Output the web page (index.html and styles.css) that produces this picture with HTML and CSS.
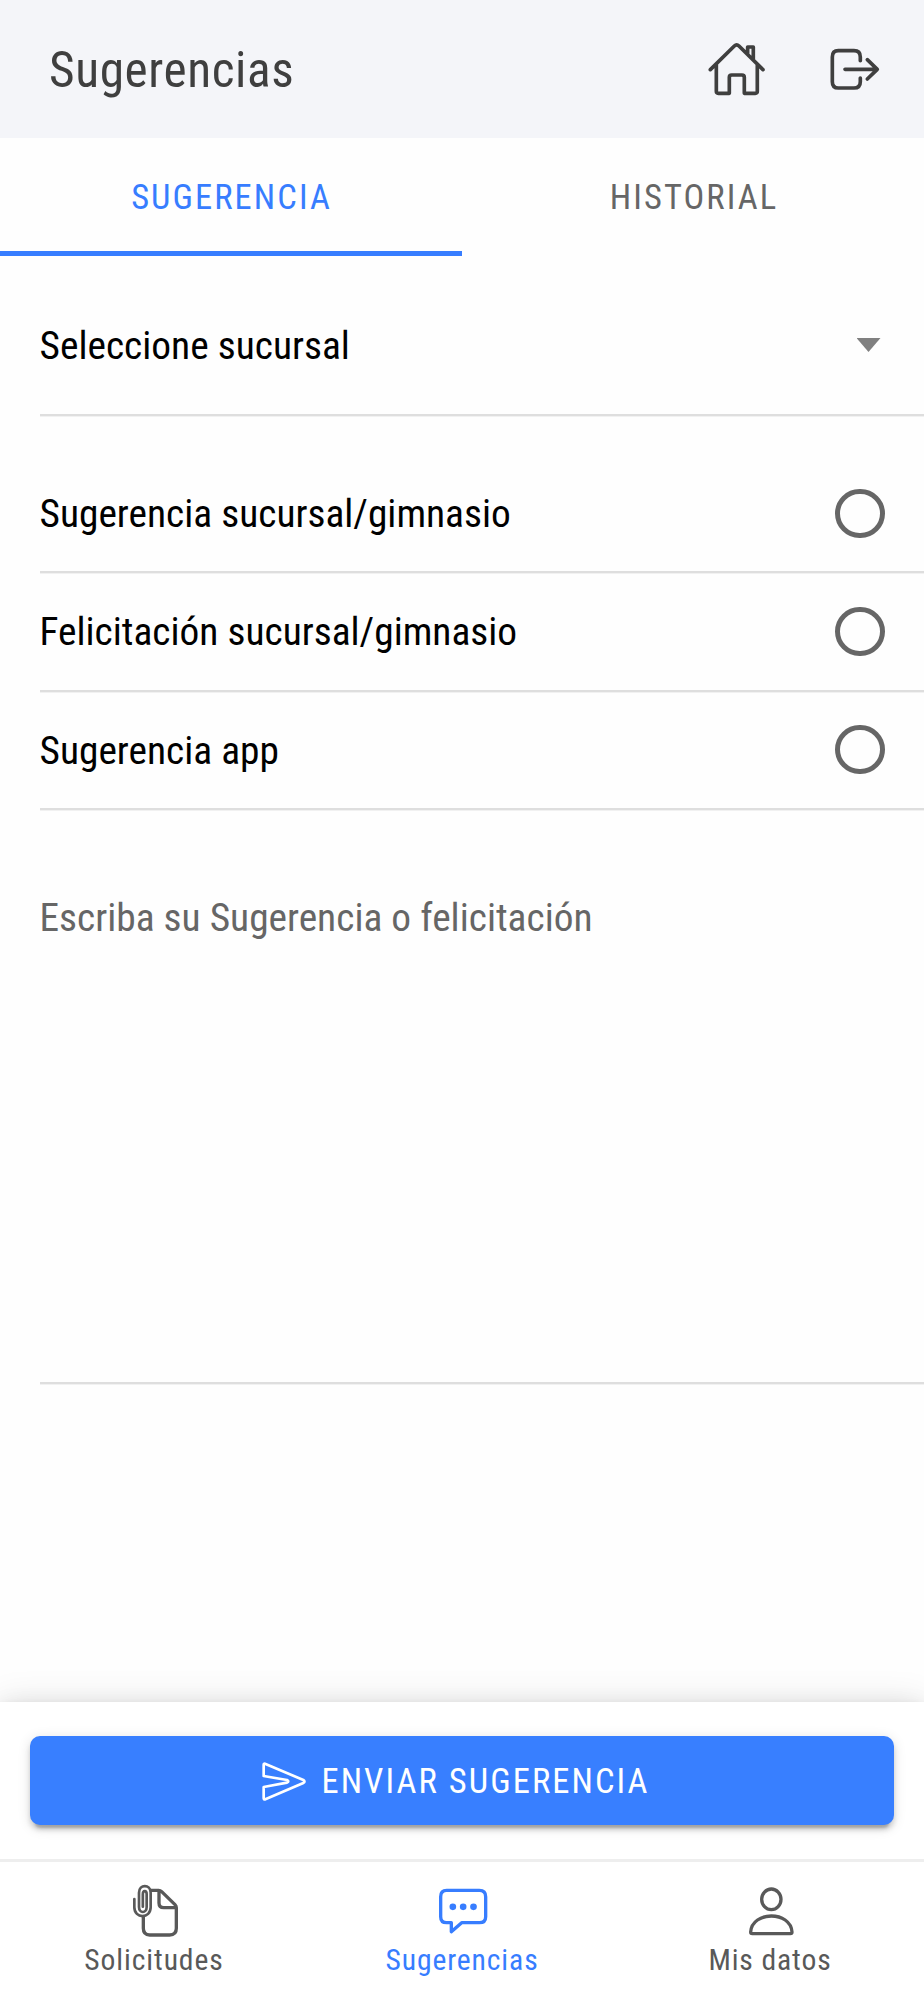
FILE: index.html
```html
<!DOCTYPE html>
<html lang="es">
<head>
<meta charset="utf-8">
<title>Sugerencias</title>
<link rel="stylesheet" href="styles.css">
</head>
<body>
<div class="app">
  <header class="toolbar">
    <h1 class="title">Sugerencias</h1>
    <div class="actions">
      <svg class="icon-home" viewBox="144 122 172 168" aria-hidden="true"><path d="M151 208 L223 137 Q230 130 237 137 L309 208 M169 193 V273 Q169 279 175 279 H208 V231 Q208 224 215 224 H246 Q253 224 253 231 V279 H286 Q292 279 292 273 V193 M263 161 V140 H280 V178"/></svg>
      <svg class="icon-exit" viewBox="508 140 154 134" aria-hidden="true"><path d="M602 181 V170 Q602 151 583 151 H536 Q518 151 518 170 V244 Q518 263 536 263 H583 Q602 263 602 244 V233 M556 207 H652 M623 178 L653 207 L623 236"/></svg>
    </div>
  </header>
  <nav class="tabs">
    <a class="tab tab-on"><span>SUGERENCIA</span></a>
    <a class="tab"><span>HISTORIAL</span></a>
  </nav>
  <main class="content">
    <div class="item item-select"><span>Seleccione sucursal</span><i class="caret"></i></div>
    <div class="group">
      <div class="item"><span>Sugerencia sucursal/gimnasio</span><i class="radio"></i></div>
      <div class="item"><span>Felicitación sucursal/gimnasio</span><i class="radio"></i></div>
      <div class="item"><span>Sugerencia app</span><i class="radio"></i></div>
    </div>
    <div class="item item-area"><span>Escriba su Sugerencia o felicitación</span></div>
  </main>
  <footer class="footer">
    <button class="send">
      <svg class="icon-send" viewBox="784 304 138 122" aria-hidden="true"><path d="M792 315 Q792 311 796 312 L911 361 Q918 365 911 370 L797 419 Q792 420 792 416 V382 L862 369 Q870 365 862 361 L792 349 Z"/></svg>
      <span>ENVIAR SUGERENCIA</span>
    </button>
  </footer>
  <nav class="bottom">
    <a class="dest">
      <svg class="dest-icon" viewBox="66 42 138 162" aria-hidden="true"><path d="M123 61 H146 Q151 61 155 65 L195 104 Q199 108 199 113 V175 Q199 195 179 195 H119 Q100 195 100 175 V140 M147 63 V99 Q147 113 161 113 H197"/><path class="clip" d="M73 87 V112 C73 147 122 147 122 112 V68 C122 42 87 42 87 68 V111 C87 131 110 131 110 111 V73 C110 60 98.500 60 98.500 73 V110"/></svg>
      <span>Solicitudes</span>
    </a>
    <a class="dest dest-on">
      <svg class="dest-icon" viewBox="60 42 138 162" aria-hidden="true"><path d="M80 61 H178 Q197 61 197 80 V140 Q197 158 178 158 H125 L94 185 V158 H80 Q62 158 62 140 V80 Q62 61 80 61 Z"/><g class="dots"><circle cx="98.5" cy="110.500" r="10"/><circle cx="129.500" cy="110.500" r="10"/><circle cx="160.500" cy="110.500" r="10"/></g></svg>
      <span>Sugerencias</span>
    </a>
    <a class="dest">
      <svg class="dest-icon" viewBox="858 672 138 162" aria-hidden="true"><ellipse cx="928" cy="718" rx="29" ry="31"/><path d="M866 816 C870 752 986 752 990 816 Q990 821 985 821 H871 Q866 821 866 816 Z"/></svg>
      <span>Mis datos</span>
    </a>
  </nav>
</div>
</body>
</html>
```
FILE: styles.css
```css
* { box-sizing: border-box; }
body {
  margin: 0;
  font-family: "Roboto Condensed", Roboto, sans-serif;
  font-stretch: 75%;
  background: #fefefe;
  color: #000;
}
.app { width: 924px; height: 2000px; display: flex; flex-direction: column; overflow: hidden; }
svg { fill: none; stroke: currentColor; stroke-linecap: round; stroke-linejoin: round; stroke-width: 11; overflow: visible; flex: none; }

.toolbar { height: 138px; background: #f4f5f9; color: #3f3f3f; display: flex; align-items: center; justify-content: space-between; padding: 0 44px 0 49px; }
.title { margin: 0; padding-top: 1px; font-size: 49.3px; font-weight: 400; letter-spacing: .62px; line-height: 58px; }
.actions { display: flex; align-items: center; gap: 63px; }
.icon-home { width: 57.3px; height: 56px; }
.icon-exit { width: 51.3px; height: 44.700px; }

.tabs { height: 118px; display: flex; }
.tab { width: 50%; display: flex; align-items: center; justify-content: center; padding: 5px 0 0 2px; font-size: 34.5px; letter-spacing: 2.07px; color: #666; border-bottom: 5px solid transparent; }
.tab-on { color: #377dff; border-bottom-color: #377dff; padding-left: 1px; }

.content { flex: 1; }
.item { margin-left: 39.5px; height: 118.300px; display: flex; align-items: center; justify-content: space-between; padding-right: 39.5px; font-size: 39.4px; line-height: 48px; border-bottom: 2px solid #dedede; box-shadow: 0 1px #f1f1f1; }
.item span { padding-top: 2px; }
.item-select { height: 160px; padding-top: 20px; }
.caret { width: 24px; height: 14px; margin-right: 4px; background: #808080; clip-path: polygon(0 0, 100% 0, 50% 100%); }
.group { margin-top: 39px; }
.radio { width: 49.3px; height: 49.3px; border: 5px solid #666; border-radius: 50%; }
.item-area { height: 574px; align-items: flex-start; padding-top: 82px; color: #666; }

.footer { height: 157px; padding: 34px 29.600px 0; background: #fff; box-shadow: 0 5px 10px -2px rgba(0,0,0,.2), 0 10px 25px rgba(0,0,0,.14), 0 2px 35px rgba(0,0,0,.12); }
.send { width: 100%; height: 89px; border: 0; border-radius: 10px; background: #387fff; color: #fff; display: flex; align-items: center; justify-content: center; gap: 14px; padding: 0 13px 0 0; font: inherit; font-size: 34.5px; letter-spacing: 2.07px; box-shadow: 0 7.500px 2.500px -5px rgba(0,0,0,.2), 0 5px 5px rgba(0,0,0,.14), 0 2.500px 12.300px rgba(0,0,0,.12); }
.icon-send { width: 46px; height: 40.700px; stroke-width: 8; margin-top: 1px; }

.bottom { height: 141px; display: flex; background: #fff; border-top: 3px solid #eee; position: relative; }
.dest { flex: 1; display: flex; flex-direction: column; align-items: center; padding-top: 22px; color: #595959; font-size: 29.6px; letter-spacing: .9px; line-height: 36px; }
.dest-on { color: #377dff; }
.dest-icon { width: 46px; height: 54px; margin: 0 0 4px 1px; stroke-width: 10; }
.clip { stroke-width: 8; }
.dots { fill: currentColor; stroke: none; }
```
